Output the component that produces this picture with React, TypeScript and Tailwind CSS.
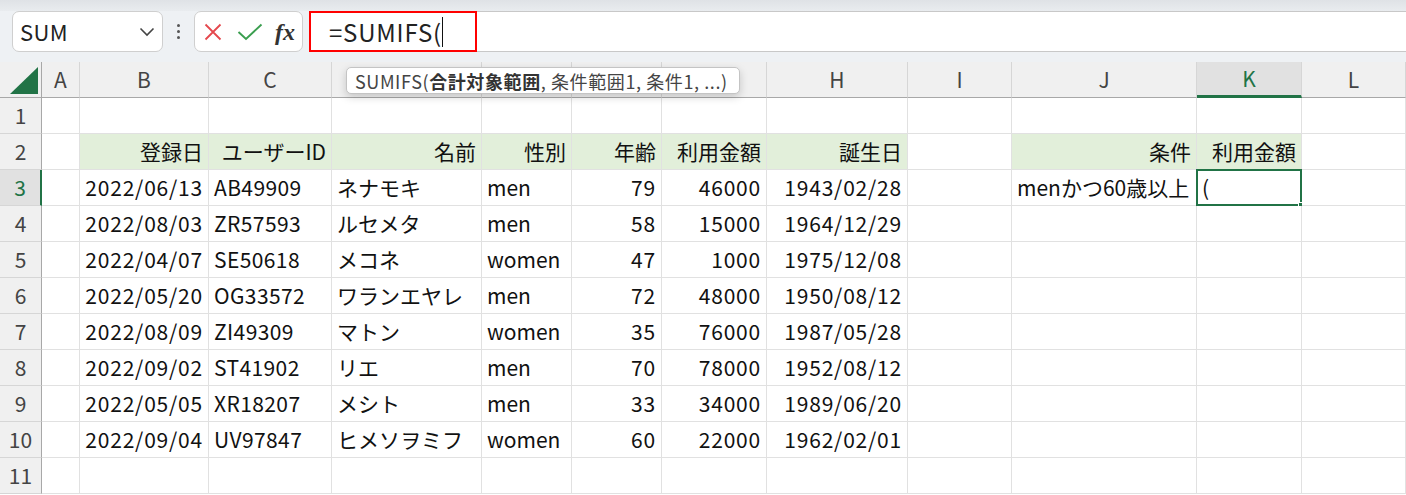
import React from "react";

const GRID =
  "grid grid-cols-[42px_38px_129px_123px_150px_90px_90px_105px_141px_104px_185px_105px_104px]";

const FONT = { fontFamily: '"Noto Sans CJK JP", "Noto Sans", sans-serif' };

const letters = ["A", "B", "C", "D", "E", "F", "G", "H", "I", "J", "K", "L"];

type Cell = { t: string; right?: boolean; track?: string };

const data: string[][] = [
  ["2022/06/13", "AB49909", "ネナモキ", "men", "79", "46000", "1943/02/28"],
  ["2022/08/03", "ZR57593", "ルセメタ", "men", "58", "15000", "1964/12/29"],
  ["2022/04/07", "SE50618", "メコネ", "women", "47", "1000", "1975/12/08"],
  ["2022/05/20", "OG33572", "ワランエヤレ", "men", "72", "48000", "1950/08/12"],
  ["2022/08/09", "ZI49309", "マトン", "women", "35", "76000", "1987/05/28"],
  ["2022/09/02", "ST41902", "リエ", "men", "70", "78000", "1952/08/12"],
  ["2022/05/05", "XR18207", "メシト", "men", "33", "34000", "1989/06/20"],
  ["2022/09/04", "UV97847", "ヒメソヲミフ", "women", "60", "22000", "1962/02/01"],
];

// alignment and spacing for columns B..H
const rightCols = [true, false, false, false, true, true, true];
const trackCols = [
  "tracking-[0.8px]",
  "tracking-[0.4px]",
  "",
  "",
  "tracking-[0.8px]",
  "tracking-[0.8px]",
  "tracking-[0.8px]",
];

function buildRow(r: number): Cell[] {
  const row: Cell[] = letters.map(() => ({ t: "" }));
  if (r === 2) {
    ["登録日", "ユーザーID", "名前", "性別", "年齢", "利用金額", "誕生日"].forEach((t, i) => {
      row[i + 1] = { t, right: true };
    });
    row[9] = { t: "条件", right: true };
    row[10] = { t: "利用金額", right: true };
  }
  if (r >= 3 && r <= 10) {
    data[r - 3].forEach((t, i) => {
      row[i + 1] = { t, right: rightCols[i], track: trackCols[i] };
    });
  }
  if (r === 3) {
    row[9] = { t: "menかつ60歳以上" };
    row[10] = { t: "(" };
  }
  return row;
}

function SheetRow({ r }: { r: number }) {
  const cells = buildRow(r);
  const selected = r === 3;
  return (
    <div className={`${GRID} h-[36px]`}>
      <div
        className={
          selected
            ? "flex items-center justify-center bg-[#e1e1e1] text-[#217346] border-r-2 border-r-[#217346] border-b border-b-[#d6d6d6]"
            : "flex items-center justify-center bg-[#f0f0f0] text-[#444] border-r border-r-[#a8a8a8] border-b border-b-[#d6d6d6]"
        }
      >
        {r}
      </div>
      {cells.map((c, i) => {
        const green = r === 2 && ((i >= 1 && i <= 7) || i === 9 || i === 10);
        const isSel = r === 3 && i === 10;
        return (
          <div
            key={i}
            className={`relative flex items-center px-[5px] whitespace-nowrap border-r border-b border-[#e1e1e1] text-[#111] ${
              green ? "bg-[#e2efda]" : "bg-white"
            } ${c.right ? "justify-end" : "justify-start"} ${c.track ?? ""}`}
          >
            {c.t}
            {isSel && (
              <div className="absolute -left-[1px] -top-[1px] -right-[1px] -bottom-[1px] border-2 border-[#217346]">
                <div className="absolute -right-[3px] -bottom-[3px] w-[5px] h-[5px] bg-[#217346] border border-white" />
              </div>
            )}
          </div>
        );
      })}
    </div>
  );
}

export default function App() {
  return (
    <div className="w-[1406px] h-[495px] overflow-hidden bg-white text-[21px]" style={FONT}>
      {/* Formula bar */}
      <div className="bg-[#eef1f4] pb-[10px]">
        <div className="h-[11px] bg-gradient-to-b from-[#dfe2e6] to-[#e9ecef]" />
        <div className="flex items-stretch h-[41px]">
          <div className="ml-[12px] w-[151px] flex items-center justify-between pl-[7px] pr-[7px] bg-white border border-[#cfcfcf] rounded-[7px]">
            <span className="text-[#222] text-[22px] tracking-[0.4px]">SUM</span>
            <svg width="16" height="10" viewBox="0 0 16 10" fill="none" stroke="#444" strokeWidth="1.6">
              <path d="M1.5 1.5 L8 8 L14.5 1.5" />
            </svg>
          </div>
          <div className="w-[31px] flex flex-col items-center justify-center gap-[3px]">
            <span className="w-[3px] h-[3px] rounded-full bg-[#555]" />
            <span className="w-[3px] h-[3px] rounded-full bg-[#555]" />
            <span className="w-[3px] h-[3px] rounded-full bg-[#555]" />
          </div>
          <div className="w-[109px] flex items-center bg-white border border-[#cfcfcf] rounded-[7px] pl-[9px]">
            <svg width="18" height="18" viewBox="0 0 18 18" stroke="#e5484d" strokeWidth="1.8" fill="none">
              <path d="M1.5 1.5 L16.5 16.5 M16.5 1.5 L1.5 16.5" />
            </svg>
            <svg className="ml-[15px]" width="26" height="18" viewBox="0 0 26 18" stroke="#3a9e4f" strokeWidth="1.9" fill="none">
              <path d="M1.5 9 L9 16 L24.5 1.5" />
            </svg>
            <span
              className="ml-[12px] italic font-bold text-[24px] text-[#333] leading-none"
              style={{ fontFamily: '"Liberation Serif", "DejaVu Serif", serif' }}
            >
              fx
            </span>
          </div>
          <div className="ml-[7px] flex-1 relative bg-white border-y border-[#c8c8c8]">
            <div className="absolute -top-[1px] -left-[1px] w-[168px] -bottom-[1px] border-2 border-[#ff0000]" />
            <div className="h-full flex items-center pl-[19px] text-[#222] text-[24px] tracking-[0.8px]">
              <span>=SUMIFS(</span>
              <span className="w-[1px] h-[30px] bg-[#111]" />
            </div>
          </div>
        </div>
      </div>

      {/* Sheet */}
      <div className="relative">
        <div className={`${GRID} h-[36px]`}>
          <div className="flex items-end justify-end bg-[#f0f0f0] border-r border-r-[#a8a8a8] border-b border-b-[#a8a8a8] pr-[3px] pb-[3px]">
            <svg width="28" height="27" viewBox="0 0 28 27">
              <polygon points="0,27 28,27 28,0" fill="#217346" />
            </svg>
          </div>
          {letters.map((l) =>
            l === "K" ? (
              <div
                key={l}
                className="flex items-center justify-center bg-[#e1e1e1] text-[#217346] border-r border-r-[#d6d6d6] border-b-[3px] border-b-[#217346]"
              >
                {l}
              </div>
            ) : (
              <div
                key={l}
                className="flex items-center justify-center bg-[#f0f0f0] text-[#444] border-r border-r-[#d6d6d6] border-b border-b-[#a8a8a8]"
              >
                {l}
              </div>
            )
          )}
        </div>

        {Array.from({ length: 11 }, (_, i) => (
          <SheetRow key={i} r={i + 1} />
        ))}

        {/* Function tooltip */}
        <div className="absolute left-[346px] top-[5px] w-[394px] h-[27px] flex items-center pl-[8px] bg-white border border-[#c4c4c4] rounded-[5px] shadow-[0_3px_8px_rgba(0,0,0,0.18)] text-[18px] tracking-[0.6px] text-[#444] whitespace-nowrap leading-none">
          SUMIFS(<b className="font-bold text-[#333]">合計対象範囲</b>, 条件範囲1, 条件1, ...)
        </div>
      </div>
    </div>
  );
}
